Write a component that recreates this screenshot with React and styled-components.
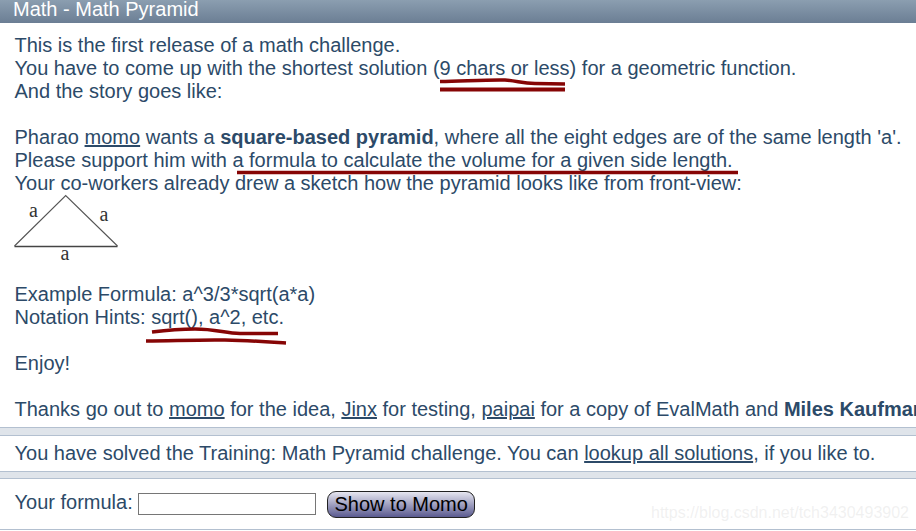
import styled, { createGlobalStyle } from "styled-components";

const Global = createGlobalStyle`
  html, body {
    margin: 0;
    height: 100%;
    overflow: hidden;
    background: #fff;
  }
`;

const Page = styled.div`
  position: relative;
  width: 916px;
  height: 531px;
  overflow: hidden;
  font-family: "Liberation Sans", Arial, sans-serif;
  font-size: 20px;
  line-height: 23px;
  color: #2c4a68;
  white-space: nowrap;
`;

const Header = styled.div`
  height: 23px;
  padding-left: 13px;
  line-height: 19px;
  color: #fff;
  background: linear-gradient(#8b9eb0, #6b7e94);
`;

const Main = styled.div`
  height: 405px;
  padding: 11px 0 0 14.5px;
  box-sizing: border-box;
  border-bottom: 1px solid #b3c0d0;
`;

const Link = styled.a`
  color: inherit;
  text-decoration: underline;
`;

const Band = styled.div`
  height: ${(props) => props.$size}px;
  background: #dfe4ea;
`;

const Notice = styled.div`
  height: 35px;
  padding-left: 14.5px;
  line-height: 35px;
  border-top: 1px solid #b3c0d0;
  border-bottom: 1px solid #b3c0d0;
`;

const FormRow = styled.form`
  display: flex;
  align-items: center;
  height: 50px;
  padding-left: 14.5px;
  border-top: 1px solid #b3c0d0;
  border-bottom: 1px solid #b3c0d0;
`;

const Label = styled.label`
  margin-right: 5.5px;
  position: relative;
  top: -2px;
`;

const Input = styled.input`
  width: 178px;
  height: 22px;
  padding: 0;
  box-sizing: border-box;
  border: 1px solid #767676;
  background: #fff;
  margin-right: 11px;
`;

const Button = styled.button`
  width: 148px;
  height: 27px;
  padding: 0;
  font: inherit;
  color: #000;
  border: 1px solid #222;
  border-radius: 9px;
  background: linear-gradient(#e6e6f0, #5a5a90);
`;

const Sketch = styled.svg`
  display: block;
  margin-left: -14.5px;
  overflow: visible;
`;

const SketchLabel = styled.text`
  font-family: "Liberation Serif", serif;
  font-size: 20px;
  text-anchor: middle;
  fill: #333;
`;

const Scribbles = styled.svg`
  position: absolute;
  top: 0;
  left: 0;
  pointer-events: none;
`;

const Scribble = styled.path`
  fill: none;
  stroke: #860505;
  stroke-width: ${(props) => props.$weight}px;
  stroke-linejoin: round;
`;

const Watermark = styled.div`
  position: absolute;
  left: 651px;
  top: 504px;
  font-size: 16px;
  line-height: 18px;
  color: rgba(190, 190, 190, 0.22);
`;

const App = () => {
  return (
    <Page>
      <Global />
      <Header>Math - Math Pyramid</Header>
      <Main>
        This is the first release of a math challenge.<br />
        You have to come up with the shortest solution (9 chars or less) for a geometric function.<br />
        And the story goes like:<br />
        <br />
        Pharao <Link>momo</Link> wants a <b>square-based pyramid</b>, where all the eight edges are of the same length 'a'.<br />
        Please support him with a formula to calculate the volume for a given side length.<br />
        Your co-workers already drew a sketch how the pyramid looks like from front-view:<br />
        <Sketch width="120" height="65" viewBox="0 195 120 65">
          <path d="M14.5 246 L65.7 195.5 L117.5 246" fill="none" stroke="#555" strokeWidth="1.1" />
          <path d="M14.5 246.5 L117.5 246.5" fill="none" stroke="#444" strokeWidth="1.3" />
          <SketchLabel x="33.5" y="217">a</SketchLabel>
          <SketchLabel x="104" y="221">a</SketchLabel>
          <SketchLabel x="65" y="260">a</SketchLabel>
        </Sketch>
        <br />
        Example Formula: a^3/3*sqrt(a*a)<br />
        Notation Hints: sqrt(), a^2, etc.<br />
        <br />
        Enjoy!<br />
        <br />
        Thanks go out to <Link>momo</Link> for the idea, <Link>Jinx</Link> for testing, <Link>paipai</Link> for a copy of EvalMath and <b>Miles Kaufmann</b>
      </Main>
      <Band $size={7} />
      <Notice>
        You have solved the Training: Math Pyramid challenge. You can <Link>lookup all solutions</Link>, if you like to.
      </Notice>
      <Band $size={6} />
      <FormRow>
        <Label>Your formula:</Label>
        <Input type="text" />
        <Button type="button">Show to Momo</Button>
      </FormRow>
      <Scribbles width="916" height="531" viewBox="0 0 916 531">
        <Scribble $weight={3.5} d="M440 81.5 C465 81 490 79.5 505 80 C518 81 522 83.5 535 83.5 L565 84" />
        <Scribble $weight={4} d="M440 89.5 L565 89.5" />
        <Scribble $weight={3.5} d="M237 172.5 L738 172.5" />
        <Scribble $weight={3.5} d="M152 332 C168 330 180 329 195 329 C215 329 225 333 240 333.5 L278 333.5" />
        <Scribble $weight={3.5} d="M146 341 C180 340.5 205 339.5 225 340 C250 340.5 270 342 286 343" />
      </Scribbles>
      <Watermark>https://blog.csdn.net/tch3430493902</Watermark>
    </Page>
  );
};

export default App;
